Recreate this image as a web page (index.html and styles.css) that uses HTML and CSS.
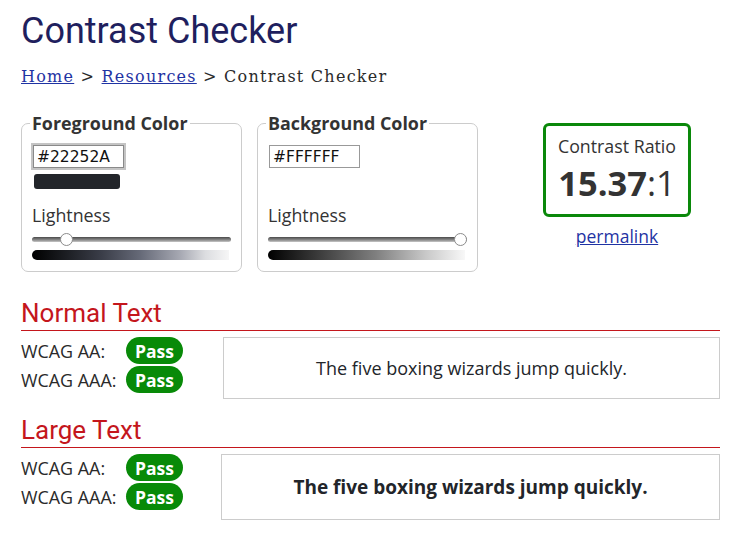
FILE: index.html
```html
<!DOCTYPE html>
<html lang="en">
<head>
<meta charset="utf-8">
<title>Contrast Checker</title>
<link rel="stylesheet" href="styles.css">
</head>
<body>
<main class="page">
  <h1 class="title">Contrast Checker</h1>
  <nav class="crumbs"><a href="#">Home</a> &gt; <a href="#">Resources</a> &gt; Contrast Checker</nav>

  <section class="picker-row">
    <fieldset class="picker">
      <legend>Foreground Color</legend>
      <input class="hex hex-focus" type="text" value="#22252A">
      <div class="swatch swatch-fg"></div>
      <label class="light-label">Lightness</label>
      <input class="range" type="range" min="0" max="100" value="15">
      <div class="ramp ramp-fg"></div>
    </fieldset>

    <fieldset class="picker">
      <legend>Background Color</legend>
      <input class="hex" type="text" value="#FFFFFF">
      <div class="swatch swatch-bg"></div>
      <label class="light-label">Lightness</label>
      <input class="range" type="range" min="0" max="100" value="100">
      <div class="ramp ramp-bg"></div>
    </fieldset>

    <div class="ratio-col">
      <div class="ratio-box">
        <div class="ratio-label">Contrast Ratio</div>
        <div class="ratio-value"><b>15.37</b>:1</div>
      </div>
      <a class="permalink" href="#">permalink</a>
    </div>
  </section>

  <section class="result">
    <h2 class="result-title">Normal Text</h2>
    <div class="result-body">
      <div class="checks">
        <div class="check"><span class="check-label">WCAG AA:</span><span class="badge">Pass</span></div>
        <div class="check"><span class="check-label">WCAG AAA:</span><span class="badge">Pass</span></div>
      </div>
      <div class="sample sample-normal">The five boxing wizards jump quickly.</div>
    </div>
  </section>

  <section class="result result-large">
    <h2 class="result-title">Large Text</h2>
    <div class="result-body">
      <div class="checks">
        <div class="check"><span class="check-label">WCAG AA:</span><span class="badge">Pass</span></div>
        <div class="check"><span class="check-label">WCAG AAA:</span><span class="badge">Pass</span></div>
      </div>
      <div class="sample sample-large">The five boxing wizards jump quickly.</div>
    </div>
  </section>
</main>
</body>
</html>
```

FILE: styles.css
```css
* { box-sizing: border-box; }

html, body {
  margin: 0;
  background: #ffffff;
}

body {
  font-family: "Open Sans", "DejaVu Sans", sans-serif;
  color: #333333;
}

.page {
  width: 731px;
  padding: 10px 11px 0 21px;
}

.title {
  margin: 0 0 14px;
  font-family: Roboto, "Liberation Sans", sans-serif;
  font-weight: 400;
  font-size: 36px;
  line-height: 42px;
  color: #1f1f5e;
}

.crumbs {
  font-family: "DejaVu Serif", "Liberation Serif", serif;
  font-size: 16px;
  line-height: 22px;
  letter-spacing: 1.25px;
  color: #2a2a2a;
}

.crumbs a {
  color: #1f33a3;
  text-decoration: underline;
}

/* ---------- pickers ---------- */
.picker-row {
  display: flex;
  align-items: flex-start;
  margin-top: 24px;
}

.picker {
  width: 221px;
  margin: 0 15px 0 0;
  padding: 11px 10px 11px;
  border: 1px solid #cccccc;
  border-radius: 7px;
  min-width: 0;
}

.picker legend {
  padding: 0 2px;
  margin-left: -2px;
  font-weight: 700;
  font-size: 17.9px;
  line-height: 22px;
  color: #333333;
}

.hex {
  display: block;
  width: 91px;
  height: 23px;
  margin: 0 0 0 1px;
  padding: 0 3px;
  border: 1px solid #999999;
  border-radius: 0;
  font-family: "DejaVu Sans", sans-serif;
  font-size: 15.5px;
  color: #111111;
  background: #ffffff;
  outline: none;
}

.hex-focus {
  box-shadow: 0 0 0 2px #c4c4c4;
  border-color: #8a8a8a;
}

.swatch {
  width: 86px;
  height: 15px;
  margin: 6px 0 0 2px;
  border-radius: 3px;
}

.swatch-fg { background: #22252a; }
.swatch-bg { background: #ffffff; }

.light-label {
  display: block;
  margin-top: 15px;
  font-size: 17.8px;
  line-height: 22px;
  color: #333333;
}

.range {
  -webkit-appearance: none;
  appearance: none;
  display: block;
  width: 100%;
  height: 13px;
  margin: 7px 0 0;
  padding: 0;
  background: transparent;
}

.range::-webkit-slider-runnable-track {
  height: 5px;
  border-radius: 3px;
  background: linear-gradient(#4a4a4a, #8c8c8c 60%, #c8c8c8);
}

.range::-webkit-slider-thumb {
  -webkit-appearance: none;
  appearance: none;
  width: 13px;
  height: 13px;
  margin-top: -4px;
  border-radius: 50%;
  background: #ffffff;
  border: 1px solid #8c8c8c;
}

.ramp {
  width: 197px;
  height: 10px;
  margin-top: 4px;
  border-radius: 5px 0 0 5px;
}

.ramp-fg {
  background: linear-gradient(to right, #000000, #1d1f24 18%, #3a3d48 35%, #666a78 55%, #a6a8b2 75%, #dcdde0 88%, #f6f6f6);
}

.ramp-bg {
  background: linear-gradient(to right, #000000, #3a3a3a 25%, #808080 55%, #c8c8c8 80%, #f8f8f8);
}

/* ---------- ratio ---------- */
.ratio-col {
  display: flex;
  flex-direction: column;
  align-items: center;
  width: 148px;
  margin: 11px 0 0 50px;
}

.ratio-box {
  width: 148px;
  padding: 10px 0 11px;
  border: 3px solid #0a880a;
  border-radius: 6px;
  text-align: center;
}

.ratio-label {
  font-size: 17.8px;
  line-height: 20px;
  color: #333333;
}

.ratio-value {
  margin-top: 7px;
  font-size: 34.5px;
  line-height: 40px;
  color: #333333;
}

.ratio-value b { font-weight: 700; }

.permalink {
  margin-top: 7px;
  font-size: 17.5px;
  line-height: 24px;
  color: #1f33a3;
  text-decoration: underline;
}

/* ---------- results ---------- */
.result { margin-top: 26px; }
.result-large { margin-top: 16px; }

.result-title {
  margin: 0;
  padding-bottom: 2px;
  border-bottom: 1px solid #c4161c;
  font-family: Roboto, "Liberation Sans", sans-serif;
  font-weight: 400;
  font-size: 26px;
  line-height: 30px;
  color: #c4161c;
}

.result-body {
  display: flex;
  align-items: flex-start;
  margin-top: 6px;
}

.checks {
  display: flex;
  flex-direction: column;
  gap: 2px;
  width: 162px;
  flex: none;
}

.check {
  display: flex;
  align-items: center;
  height: 27px;
}

.check-label {
  width: 105px;
  font-size: 17.9px;
  color: #2a2a2a;
}

.badge {
  display: inline-flex;
  align-items: center;
  justify-content: center;
  width: 57px;
  height: 27px;
  border-radius: 14px;
  background: #088a08;
  color: #ffffff;
  font-weight: 700;
  font-size: 17.5px;
}

.sample {
  flex: 1;
  margin-left: 40px;
  padding: 18px 8px;
  border: 1px solid #cccccc;
  text-align: center;
  color: #22252a;
}

.sample-normal {
  font-size: 18px;
  line-height: 24px;
}

.sample-large {
  margin-left: 38px;
  font-size: 19px;
  line-height: 28px;
  font-weight: 700;
}
```
